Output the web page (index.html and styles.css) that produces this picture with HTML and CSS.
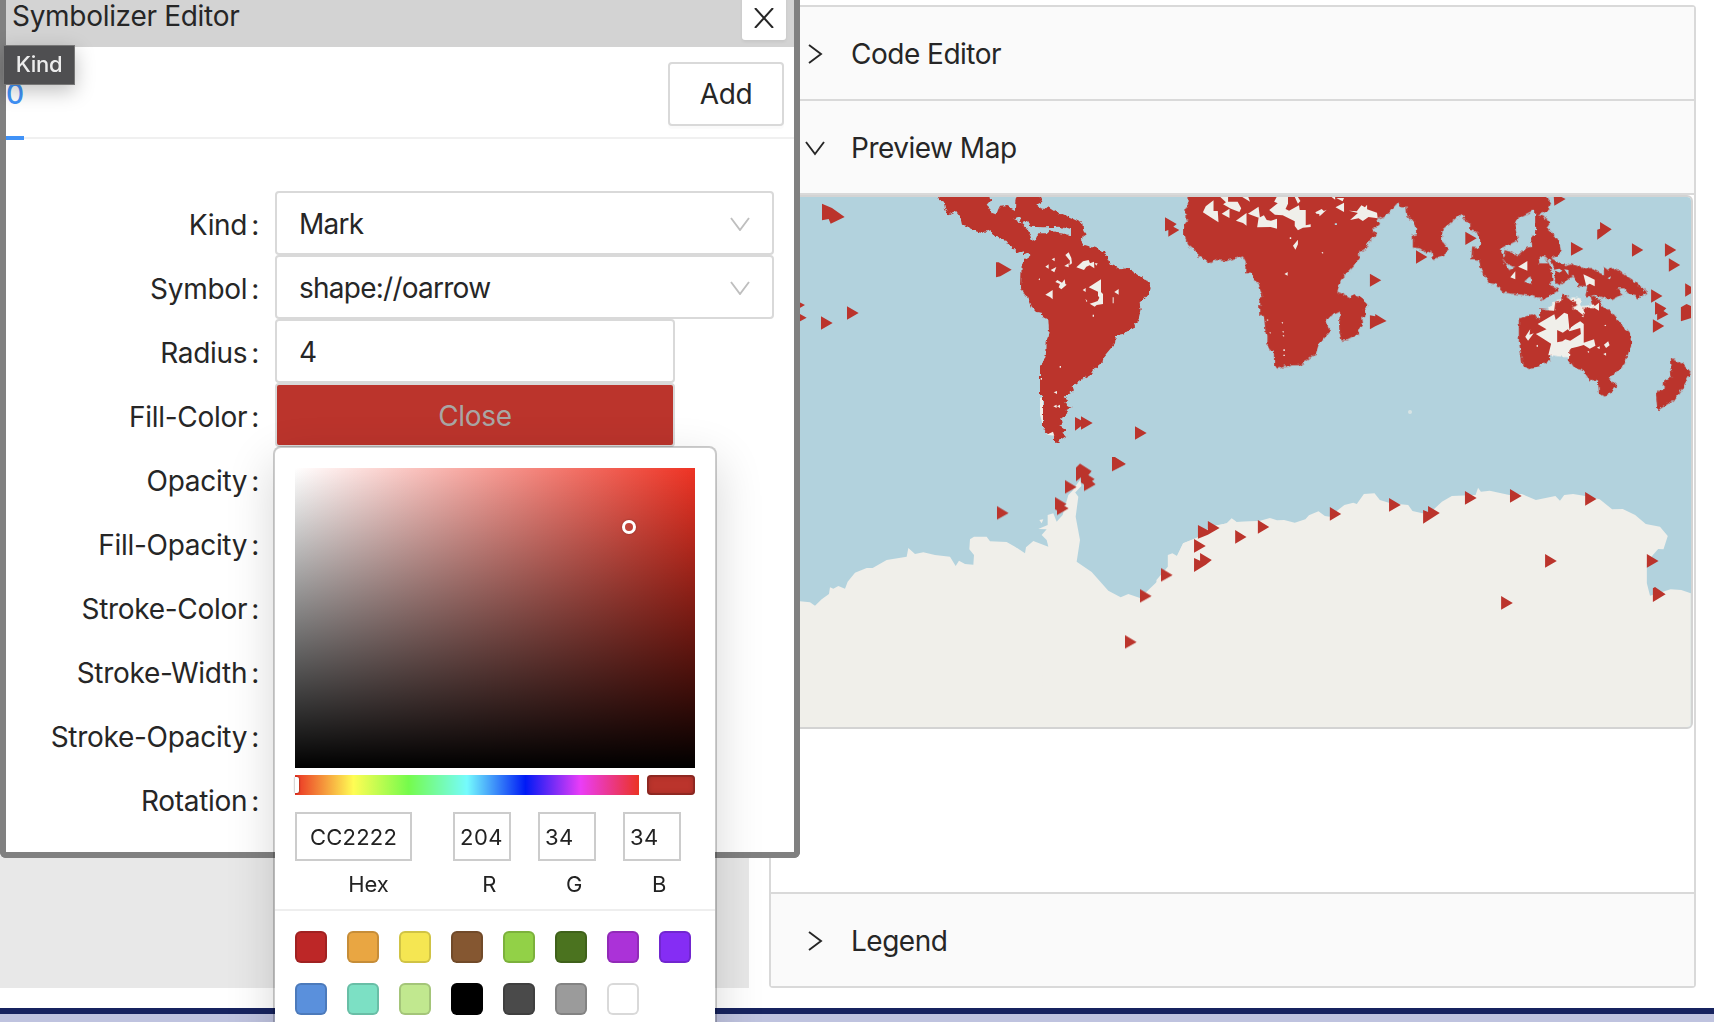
FILE: index.html
```html
<!DOCTYPE html>
<html lang="en">
<head>
<meta charset="utf-8">
<title>Symbolizer Editor</title>
<link rel="stylesheet" href="styles.css">
</head>
<body>
<div class="page">
  <div class="workspace">
    <div class="backdrop"></div>
    <section class="collapse">
      <div class="panel-head">
        <svg class="arrow" viewBox="0 0 20 20"><path d="M4 1L16 10L4 19"/></svg><span>Code Editor</span>
      </div>
      <div class="panel-head">
        <svg class="arrow" viewBox="0 0 20 20"><path d="M1 4L10 16L19 4"/></svg><span>Preview Map</span>
      </div>
      <div class="panel-body">
        <svg class="map" viewBox="773 197 918 530" preserveAspectRatio="none">
          <rect class="sea" x="772" y="197" width="919" height="530"/>
          <!-- Antarctica -->
          <g class="land" transform="translate(780 440) scale(.33333)">
            <path d="M-30 484H60L90 487 105 497 125 478 147 462 150 442 160 446 175 438 195 446 203 425 225 398 260 384 278 384 320 360 380 350 385 324 405 342 430 337 465 345 510 350 527 378 537 362 555 372 580 374 582 345 568 328 570 298 582 290 620 290 630 304 680 306 705 320 735 340 738 322 760 303 805 320 800 300 785 285 800 268 775 267 803 255 803 225 820 220 830 245 848 225 865 165 880 150 895 170 887 230 900 300 890 365 935 396 985 452 1022 472 1045 462 1080 474 1145 412 1167 380 1165 345 1190 350 1210 310 1250 295 1290 262 1340 250 1355 235 1370 246 1440 244V864H-30Z"/>
            <path d="M878 150L900 120 904 138 885 158ZM778 240L790 238 785 250ZM785 655L790 660 788 740 779 710Z"/>
          </g>
          <g class="land" transform="translate(1160 440) scale(.35459 .33333)">
            <path d="M-10 420L22 380 22 345 35 340 48 348 65 310 107 292 150 258 190 250 203 236 215 246 280 243 310 234 330 241 350 240 380 248 410 238 420 226 447 214 465 228 478 230 520 195 545 188 555 192 575 162 605 160 620 180 650 190 700 195 712 213 740 220 765 215 795 185 823 168 890 165 897 143 905 155 930 152 985 165 1020 162 1060 180 1115 168 1128 182 1140 165 1165 162 1195 167 1240 178 1275 208 1305 207 1340 225 1370 252 1410 260 1432 288 1420 328 1405 327 1390 345 1373 370V430L1382 467 1440 448 1470 450 1497 460V864H-10Z"/>
          </g>
          <!-- Patagonian coast and Kerguelen -->
          <path class="land" d="M1040 398L1043 397V425L1040 415Z"/>
          <circle class="land" cx="1410" cy="412" r="2" opacity=".6"/>
          <g filter="url(#coast)">
            <!-- Americas -->
            <g transform="translate(780 180) scale(.33333)">
              <path class="mark" d="M468 40L480 62 492 68 495 85 505 103 528 92 540 108 546 134 560 137 572 149 605 159 631 150 645 170 678 180 690 197 713 220 728 214 732 223 747 216 748 232 735 240 725 255 723 322 735 345 745 352 757 385 768 396 785 398 790 412 805 420 807 450 800 485 799 520 790 545 780 558V645L789 650V745L802 765 815 758 822 768V788H830L862 768 848 760 860 752 838 738 851 724 843 716 862 700 856 692 875 681 853 668 862 660 850 650 880 634 875 620 900 602 935 582 945 565 968 545 970 532 1005 490 1008 466 1028 462 1058 445 1075 420 1082 390 1079 371 1110 335 1112 318 1105 305 1042 265 1022 268 990 252 977 222 945 204 912 194 901 178 920 163 910 150 907 130 868 112 835 98 803 78 790 90 768 75 787 65 775 40H711L706 65 705 90 682 78 660 80 650 103 635 100 628 85 620 77 633 62 630 40Z"/>
              <path class="sea" d="M700 116L722 108 720 122 724 130 745 122 748 140 790 142 840 140 873 150V166L860 163 850 158 825 155 808 150 800 160 775 160 765 182 755 180 750 165 740 150 735 142 725 133Z"/>
            </g>
            <!-- Africa, Asia, Oceania -->
            <g transform="translate(1160 180) scale(.35459 .33333)">
              <path class="land" d="M1100 380L1118 360 1165 352 1187 355 1185 380 1240 370 1250 395 1200 540 1100 525 1060 440Z"/>
              <path class="mark" d="M77 40L79 80 72 85V118L78 120 68 135V170L80 195 100 212 110 228 140 249 160 240 183 243 234 230 242 245 240 280 256 278 265 300 278 310 288 345 280 362V405L293 405 298 460 303 465V495L310 510 321 512 322 558 332 566 375 556 395 555 440 520 447 495 480 455 467 425 475 412 508 395 505 430 506 455 512 482 530 480 562 462 558 450 573 432 570 412 580 405 575 390 585 375 575 358 548 342 538 352 500 335 510 300 550 255 565 232 557 220 580 205 592 180 612 165 598 150 618 132 612 120 645 100 670 68 680 82 695 82 697 108 706 120 715 120 722 135V163L713 165V203L733 205 750 218 765 212 770 238 805 222 812 205 795 183 797 148 848 102 862 125 875 128V150L892 155 903 180 902 205 880 203 878 240 900 242 905 270 930 310 948 313 970 338 1050 348 1080 360 1125 330 1100 315 1107 300 1104 265 1092 240 1125 225 1130 205 1125 180 1090 145 1103 125 1067 103 1095 92 1103 68 1085 40Z"/>
              <path class="sea" d="M1058 93L1048 93 1008 115 1000 135 1010 180 958 208 968 232 972 210 1010 225 1030 205 1050 200 1045 170 1058 165ZM1068 228L1090 234 1094 250 1070 250ZM962 232L975 250 1000 262 985 270ZM1030 305L1045 290 1048 312Z"/>
              <path class="mark" d="M1098 232L1140 255 1160 250 1200 268 1210 262 1252 285V258L1265 268 1285 265 1340 305 1375 338 1345 357 1342 345 1320 340 1310 325 1290 325 1305 343 1275 360 1225 345 1200 350 1205 318 1180 318 1165 288 1130 312 1112 300 1115 275Z"/>
              <path class="mark" d="M1012 415L1048 403 1072 418V385L1112 390 1115 365 1135 362V338L1178 375 1160 382 1195 405V382L1225 385 1213 345 1245 362 1240 370 1275 400 1300 432 1325 460 1330 490 1310 555 1265 595 1290 620 1255 650 1238 640 1235 600 1210 600 1190 570 1170 565 1153 540 1155 505 1120 515 1100 522V542L1042 568 1022 555 1012 480Z"/>
              <path class="mark" d="M1438 532L1475 552 1497 580 1470 630 1450 660 1403 692 1398 635 1420 628 1422 600 1442 592Z"/>
            </g>
          </g>
          <!-- gaps between symbols, Americas -->
          <g transform="translate(780 180) scale(.33333)">
            <path class="land" d="M856 225l10-8 8 17 2 16-8 6 2-14zM853 258l13-8v12zM815 238l9-5v11zM796 260l10-7v13zM812 270l17-9-6 16zM889 262l20-18 17-4 4 10 12-5 1 20-14-9-10 4-7 10zM944 250h9l-4 7zM832 300l14 8 8-10 2 14 4 2-16 14-8-6 4-10-14-6zM775 298l5-3v6zM796 344l22-14v28l-8-7zM926 322l37-24V336l6 6v30l-19 3-6 5-15-9 14-4 10-4 5-10-4-6V335zM908 330l9-6v12zM1003 336l13-9v17zM998 352h3v18h-3zM916 356l6 7-2 4zM938 404h4v6h-4zM839 558h4v5h-4zM782 594h4v5h-4zM821 637l10-4v9zM820 679l10-5v10zM831 679l9-5v10zM800 764l19-9 4 12z"/>
          </g>
          <!-- gaps between symbols, Sahara, Arabia and Australia -->
          <g transform="translate(1160 180) scale(.35459 .33333)">
            <path class="land" d="M121 97l8-18 22-18v32h12l2 34-20-14zM170 51h22v14h27l10 20-5 11-24-10-22-13 8-6zM174 101l22-15v28zM214 122l30-23v38l-10-8zM248 101l30-21 4 35zM232 51h17l5 14zM274 142l4-28 15-8 8 14 12 2 17-6v30l-18-5zM308 90l24-20-10-5 7-14H361v20l-7 16 10 5 28-16 2 14h17v46l14-3v8l-22 2-14 8-9-13v-14l-34-18-22-2zM380 51h9l7 12-7 8zM438 97l18-10 6 6 8-4-12 12-8 8-1-7-8-1zM484 51h10v8zM495 82l24-14v28zM497 54h22l-4 10zM533 92l22 2 13-18 10 6 6-8v14l28 10 2 17-26-4-16 12-12-8-24 5 22-21zM375 197l14-18v14l-7 16zM351 282l9-6v11zM366 172h4v5h-4zM455 218l5-3v6zM300 420l5-2v5zM342 428l5-2v5zM344 455l5-2v5zM345 467l5-2v5zM308 458l4-2v5zM348 508h4v5h-4zM348 524h4v4h-4zM1010 260l26-17v29zM988 292l14-18v24zM1040 303l4-4zM1194 283l12 6 20 10v20l-14-8-10 6z"/>
            <path class="sea" d="M1030 305l15-16v22zM1108 270l18-4 9 6-10 7zM1262 295l10-6-3 9zM1140 268l12 2v16zM493 130h6v5h-6z"/>
            <path class="land" d="M1065 432L1112 403 1116 420 1140 398 1155 404V445L1172 432 1185 424 1195 432V488L1224 478 1228 497 1212 506 1195 495 1178 500 1160 505 1150 516 1095 526 1103 491 1060 462 1090 448ZM1176 384l14 4 5 24-12-5zM1222 382l16-14v24zM1030 470l14-22-2 16 12-4-16 22zM1252 494l12-10 4 12-10 8zM1250 522l8-4v9zM1205 515l5-2v6zM1232 503l8-4v8zM1060 498l6-4v7zM1252 436l6-2v5zM1185 450l8-8z"/>
            <path class="mark" d="M1120 450l16 8 14-10 5 6 30-10 2 18-30 20-14-4-8 6-15 3zM1150 400l22-12 22 18-30 25-9 20z"/>
          </g>
          <!-- single symbols -->
          <g class="mark" transform="translate(780 180) scale(.33333)">
            <path d="M126 71l30 13 38 27-42 20-6-14-20 4zM201 379l35 20-35 20zM123 409l35 20-35 20zM40 357l35 18-35 20zM44 393l36 20-36 20zM648 247h8l39 22-34 20-13 3zM885 711l18 10v-12l35 20-35 20v-10l-18 13zM1065 739l35 20-35 20zM996 831h8l33 21-41 21zM1155 112l35 20-10 8 18 10-33 20v-20l-10 4z"/>
          </g>
          <g class="mark" transform="translate(1160 180) scale(.35459 .33333)">
            <path d="M592 281l32 20-32 19zM592 406l15 3v-7l32 21-32 16-15 9zM722 211l32 20-32 20zM861 155l32 20-32 20zM1110 40l34 17-32 20zM1159 186l35 21-35 20zM1241 126l33 22-41 31v-30l8-3zM1331 190l32 20-32 20zM1424 190l32 20-32 20zM1435 235l32 20-32 20zM1481 310l32 20-32 20zM1469 382l16-10 20 10v30l-36 12zM1385 328l32 20-32 20zM1396 365l32 20-8 8 14 10-32 18v-20l-6 3zM1390 418l32 20-32 20zM1115 272l38 20-38 20z"/>
          </g>
          <g class="mark" transform="translate(780 440) scale(.33333)">
            <path d="M651 198l35 21-35 20zM855 120l35 21-35 20zM888 83l12-12 35 22-10 12 19 12-8 6 11 10-35 20v-20l-9-5v-16l-15 12zM996 52h8l33 20-41 21zM825 171l35 21-8 5 14 8-35 20v-14l-6-3zM1143 384l35 21-35 20zM1080 447l35 21-35 20zM1035 585l35 21-35 20z"/>
          </g>
          <g class="mark" transform="translate(1160 440) scale(.35459 .33333)">
            <path d="M107 255l28 16v-28l33 21-33 20-28 12zM96 297l33 21-33 20zM96 354l17 8v-23l33 21-17 14-33 22zM212 270l32 21-32 20zM276 240l32 21-32 20zM479 201l32 21-32 20zM646 174l33 21-33 20zM742 210l14 6v-18l33 21-47 32zM860 153l33 21-33 20zM987 147l33 21-33 20zM1199 156l32 21-32 20zM1086 342l33 21-33 20zM1373 342l33 21-33 20zM1390 445l6-4 30 22-36 23zM962 468l33 21-33 20z"/>
          </g>
          <defs>
            <filter id="coast" x="0" y="0" width="1" height="1" color-interpolation-filters="sRGB">
              <feTurbulence type="fractalNoise" baseFrequency=".22" numOctaves="2" seed="4"/>
              <feDisplacementMap in="SourceGraphic" scale="5" xChannelSelector="R" yChannelSelector="G"/>
            </filter>
          </defs>
        </svg>
      </div>
      <div class="panel-head last">
        <svg class="arrow" viewBox="0 0 20 20"><path d="M4 1L16 10L4 19"/></svg><span>Legend</span>
      </div>
    </section>
  </div>
  <footer class="footer"></footer>
</div>

<div class="window">
  <header class="window-head">
    <span class="window-title">Symbolizer Editor</span>
    <button class="close"><svg viewBox="0 0 20 20"><path d="M1 0L19 20M19 0L1 20"/></svg></button>
  </header>
  <div class="tabs">
    <span class="tab">0</span>
    <button class="add">Add</button>
  </div>
  <div class="form">
    <div class="row"><label>Kind</label><div class="control select"><span>Mark</span><svg viewBox="0 0 20 14"><path d="M1 1L10 13L19 1"/></svg></div></div>
    <div class="row"><label>Symbol</label><div class="control select"><span>shape://oarrow</span><svg viewBox="0 0 20 14"><path d="M1 1L10 13L19 1"/></svg></div></div>
    <div class="row"><label>Radius</label><div class="control input">4</div></div>
    <div class="row"><label>Fill-Color</label><div class="control input color">Close</div></div>
    <div class="row"><label>Opacity</label></div>
    <div class="row"><label>Fill-Opacity</label></div>
    <div class="row"><label>Stroke-Color</label></div>
    <div class="row"><label>Stroke-Width</label></div>
    <div class="row"><label>Stroke-Opacity</label></div>
    <div class="row"><label>Rotation</label></div>
  </div>
</div>

<div class="picker">
  <div class="picker-main">
    <div class="saturation"><i class="pointer"></i></div>
    <div class="sliders"><div class="hue"><i></i></div><div class="current"></div></div>
    <div class="fields">
      <div class="field hex"><div class="box">CC2222</div><span>Hex</span></div>
      <div class="field"><div class="box">204</div><span>R</span></div>
      <div class="field"><div class="box">34</div><span>G</span></div>
      <div class="field"><div class="box">34</div><span>B</span></div>
    </div>
  </div>
  <div class="presets">
    <i style="background:#bd2727"></i><i style="background:#e9a642"></i><i style="background:#f5e652"></i><i style="background:#855731"></i><i style="background:#92d147"></i><i style="background:#4b731f"></i><i style="background:#ab32d8"></i><i style="background:#852df4"></i>
    <i style="background:#5a90dc"></i><i style="background:#7ce0c4"></i><i style="background:#c1e88f"></i><i style="background:#000000"></i><i style="background:#4a4a4a"></i><i style="background:#9b9b9b"></i><i style="background:#ffffff"></i>
  </div>
</div>

<div class="tooltip">Kind</div>
</body>
</html>
```

FILE: styles.css
```css
* { box-sizing: border-box; }

body {
  margin: 0;
  width: 1716px;
  height: 1022px;
  overflow: hidden;
  position: relative;
  background: #fff;
  color: #262626;
  font: 28px/44px Inter, "Liberation Sans", sans-serif;
  letter-spacing: -0.3px;
}

button { font: inherit; color: inherit; letter-spacing: inherit; padding: 0; }

/* page behind the floating window */
.page { display: flex; flex-direction: column; height: 1022px; }
.workspace { display: flex; gap: 20px; height: 1008px; padding: 5px 20px 20px 0; }
.backdrop { width: 749px; background: #e8e8e8; }
.footer { height: 14px; margin-right: 2px; background: #bfc3df; border-top: 6px solid #17235f; }

.collapse {
  flex: 1;
  display: flex;
  flex-direction: column;
  border: 2px solid #d9d9d9;
  border-radius: 4px;
}
.panel-head {
  display: flex;
  align-items: center;
  gap: 26px;
  height: 94px;
  padding: 1px 0 0 34px;
  background: #fafafa;
  border-bottom: 2px solid #d9d9d9;
  letter-spacing: -0.5px;
}
.panel-head.last { height: 92px; border: 0; }
.arrow { width: 20px; height: 20px; fill: none; stroke: #262626; stroke-width: 1.9; }
.panel-body { flex: 1; border-bottom: 2px solid #d9d9d9; }
.map {
  display: block;
  width: 922px;
  height: 534px;
  border: 2px solid #d3d3d3;
  border-radius: 0 6px 6px 0;
}
.sea { fill: #b2d2dd; }
.land { fill: #f0efea; }
.mark { fill: #bb342c; }

/* floating window */
.window {
  position: absolute;
  left: 0;
  top: -10px;
  width: 800px;
  height: 868px;
  background: #fff;
  border: 6px solid #808080;
  border-top: 0;
  border-radius: 0 0 6px 6px;
}
.window-head {
  display: flex;
  justify-content: space-between;
  height: 57px;
  padding: 4px 8px 0 6px;
  background: #d3d3d3;
}
.close {
  display: flex;
  justify-content: center;
  align-items: center;
  width: 44px;
  height: 46px;
  padding-top: 2px;
  background: #fff;
  border: 0;
  border-radius: 3px;
  box-shadow: 0 2px 3px rgba(0,0,0,.06);
}
.close svg { width: 20px; height: 20px; fill: none; stroke: #262626; stroke-width: 2; }
.tabs {
  display: flex;
  justify-content: space-between;
  height: 92px;
  padding: 15px 10px 0 0;
  border-bottom: 2px solid #f0f0f0;
}
.tab {
  height: 78px;
  width: 18px;
  padding-top: 10px;
  color: #4092f7;
  font-weight: 500;
  border-bottom: 4px solid #4092f7;
}
.add {
  width: 116px;
  height: 64px;
  background: #fff;
  border: 2px solid #d9d9d9;
  border-radius: 4px;
  box-shadow: 0 3px 1px rgba(0,0,0,.02);
}
.form { padding-top: 52px; }
.row { display: flex; height: 64px; }
.row label { width: 269px; padding: 12px 16px 0 0; text-align: right; white-space: nowrap; }
.row label::after { content: ":"; margin-left: 4px; }
.control {
  display: flex;
  align-items: center;
  width: 499px;
  height: 64px;
  padding: 2px 22px 0;
  border: 2px solid #d9d9d9;
  border-radius: 4px;
}
.select { justify-content: space-between; letter-spacing: -0.75px; }
.select svg { width: 20px; height: 14px; fill: none; stroke: #bfbfbf; stroke-width: 1.9; }
.input { width: 400px; }
.color { justify-content: center; background: #bb342c; color: #a9a6a4; }

/* colour picker */
.picker {
  position: absolute;
  left: 273px;
  top: 446px;
  width: 444px;
  height: 620px;
  background: #fff;
  background-clip: padding-box;
  border: 2px solid rgba(0,0,0,.2);
  border-radius: 8px;
  box-shadow: 0 16px 48px rgba(0,0,0,.16);
  font-size: 22px;
  letter-spacing: 0.5px;
  color: #222;
}
.picker-main { padding: 20px 20px 0; height: 463px; border-bottom: 2px solid #eee; }
.saturation {
  position: relative;
  height: 300px;
  background: linear-gradient(to top, #000, transparent), linear-gradient(to right, #fff, #ee3324);
}
.pointer {
  position: absolute;
  left: 327px;
  top: 52px;
  width: 14px;
  height: 14px;
  border: 3px solid #fff;
  border-radius: 50%;
  box-shadow: 0 0 2px rgba(0,0,0,.4);
}
.sliders { display: flex; gap: 8px; margin-top: 7px; height: 20px; }
.hue {
  display: flex;
  align-items: center;
  width: 344px;
  background: linear-gradient(to right, #eb3324 0%, #fffd54 17%, #75fb4c 33%, #75fbfd 50%, #001af5 67%, #ea3df7 83%, #eb3324 100%);
}
.hue i { width: 4px; height: 16px; background: #fff; border-radius: 0 2px 2px 0; box-shadow: 0 0 2px rgba(0,0,0,.6); }
.current { flex: 1; border-radius: 4px; background: #bb342c; box-shadow: inset 0 0 0 2px rgba(0,0,0,.15), inset 0 0 6px rgba(0,0,0,.25); }
.fields { display: flex; gap: 12px; margin-top: 17px; }
.field { display: flex; flex-direction: column; width: 73px; padding-left: 15px; text-align: center; }
.field span { margin-top: 1px; padding-left: 15px; }
.field.hex { width: 131px; padding: 0; }
.field.hex span { padding-left: 16px; letter-spacing: 0; }
.box { width: 58px; height: 49px; padding-left: 5px; border: 2px solid #ccc; text-align: left; line-height: 46px; }
.hex .box { width: 117px; padding: 0; text-align: center; letter-spacing: 0.2px; }
.presets {
  display: grid;
  grid-template-columns: repeat(8, 32px);
  gap: 20px;
  padding: 20px;
}
.presets i { height: 32px; border-radius: 6px; box-shadow: inset 0 0 0 2px rgba(0,0,0,.15); }

.tooltip {
  position: absolute;
  left: 3px;
  top: 45px;
  width: 72px;
  height: 40px;
  background: #4f4f51;
  border: 1px solid #777;
  box-shadow: 0 6px 20px rgba(0,0,0,.25);
  color: #ececec;
  font-size: 22px;
  font-weight: 500;
  line-height: 37px;
  text-align: center;
  letter-spacing: -0.3px;
}
```
